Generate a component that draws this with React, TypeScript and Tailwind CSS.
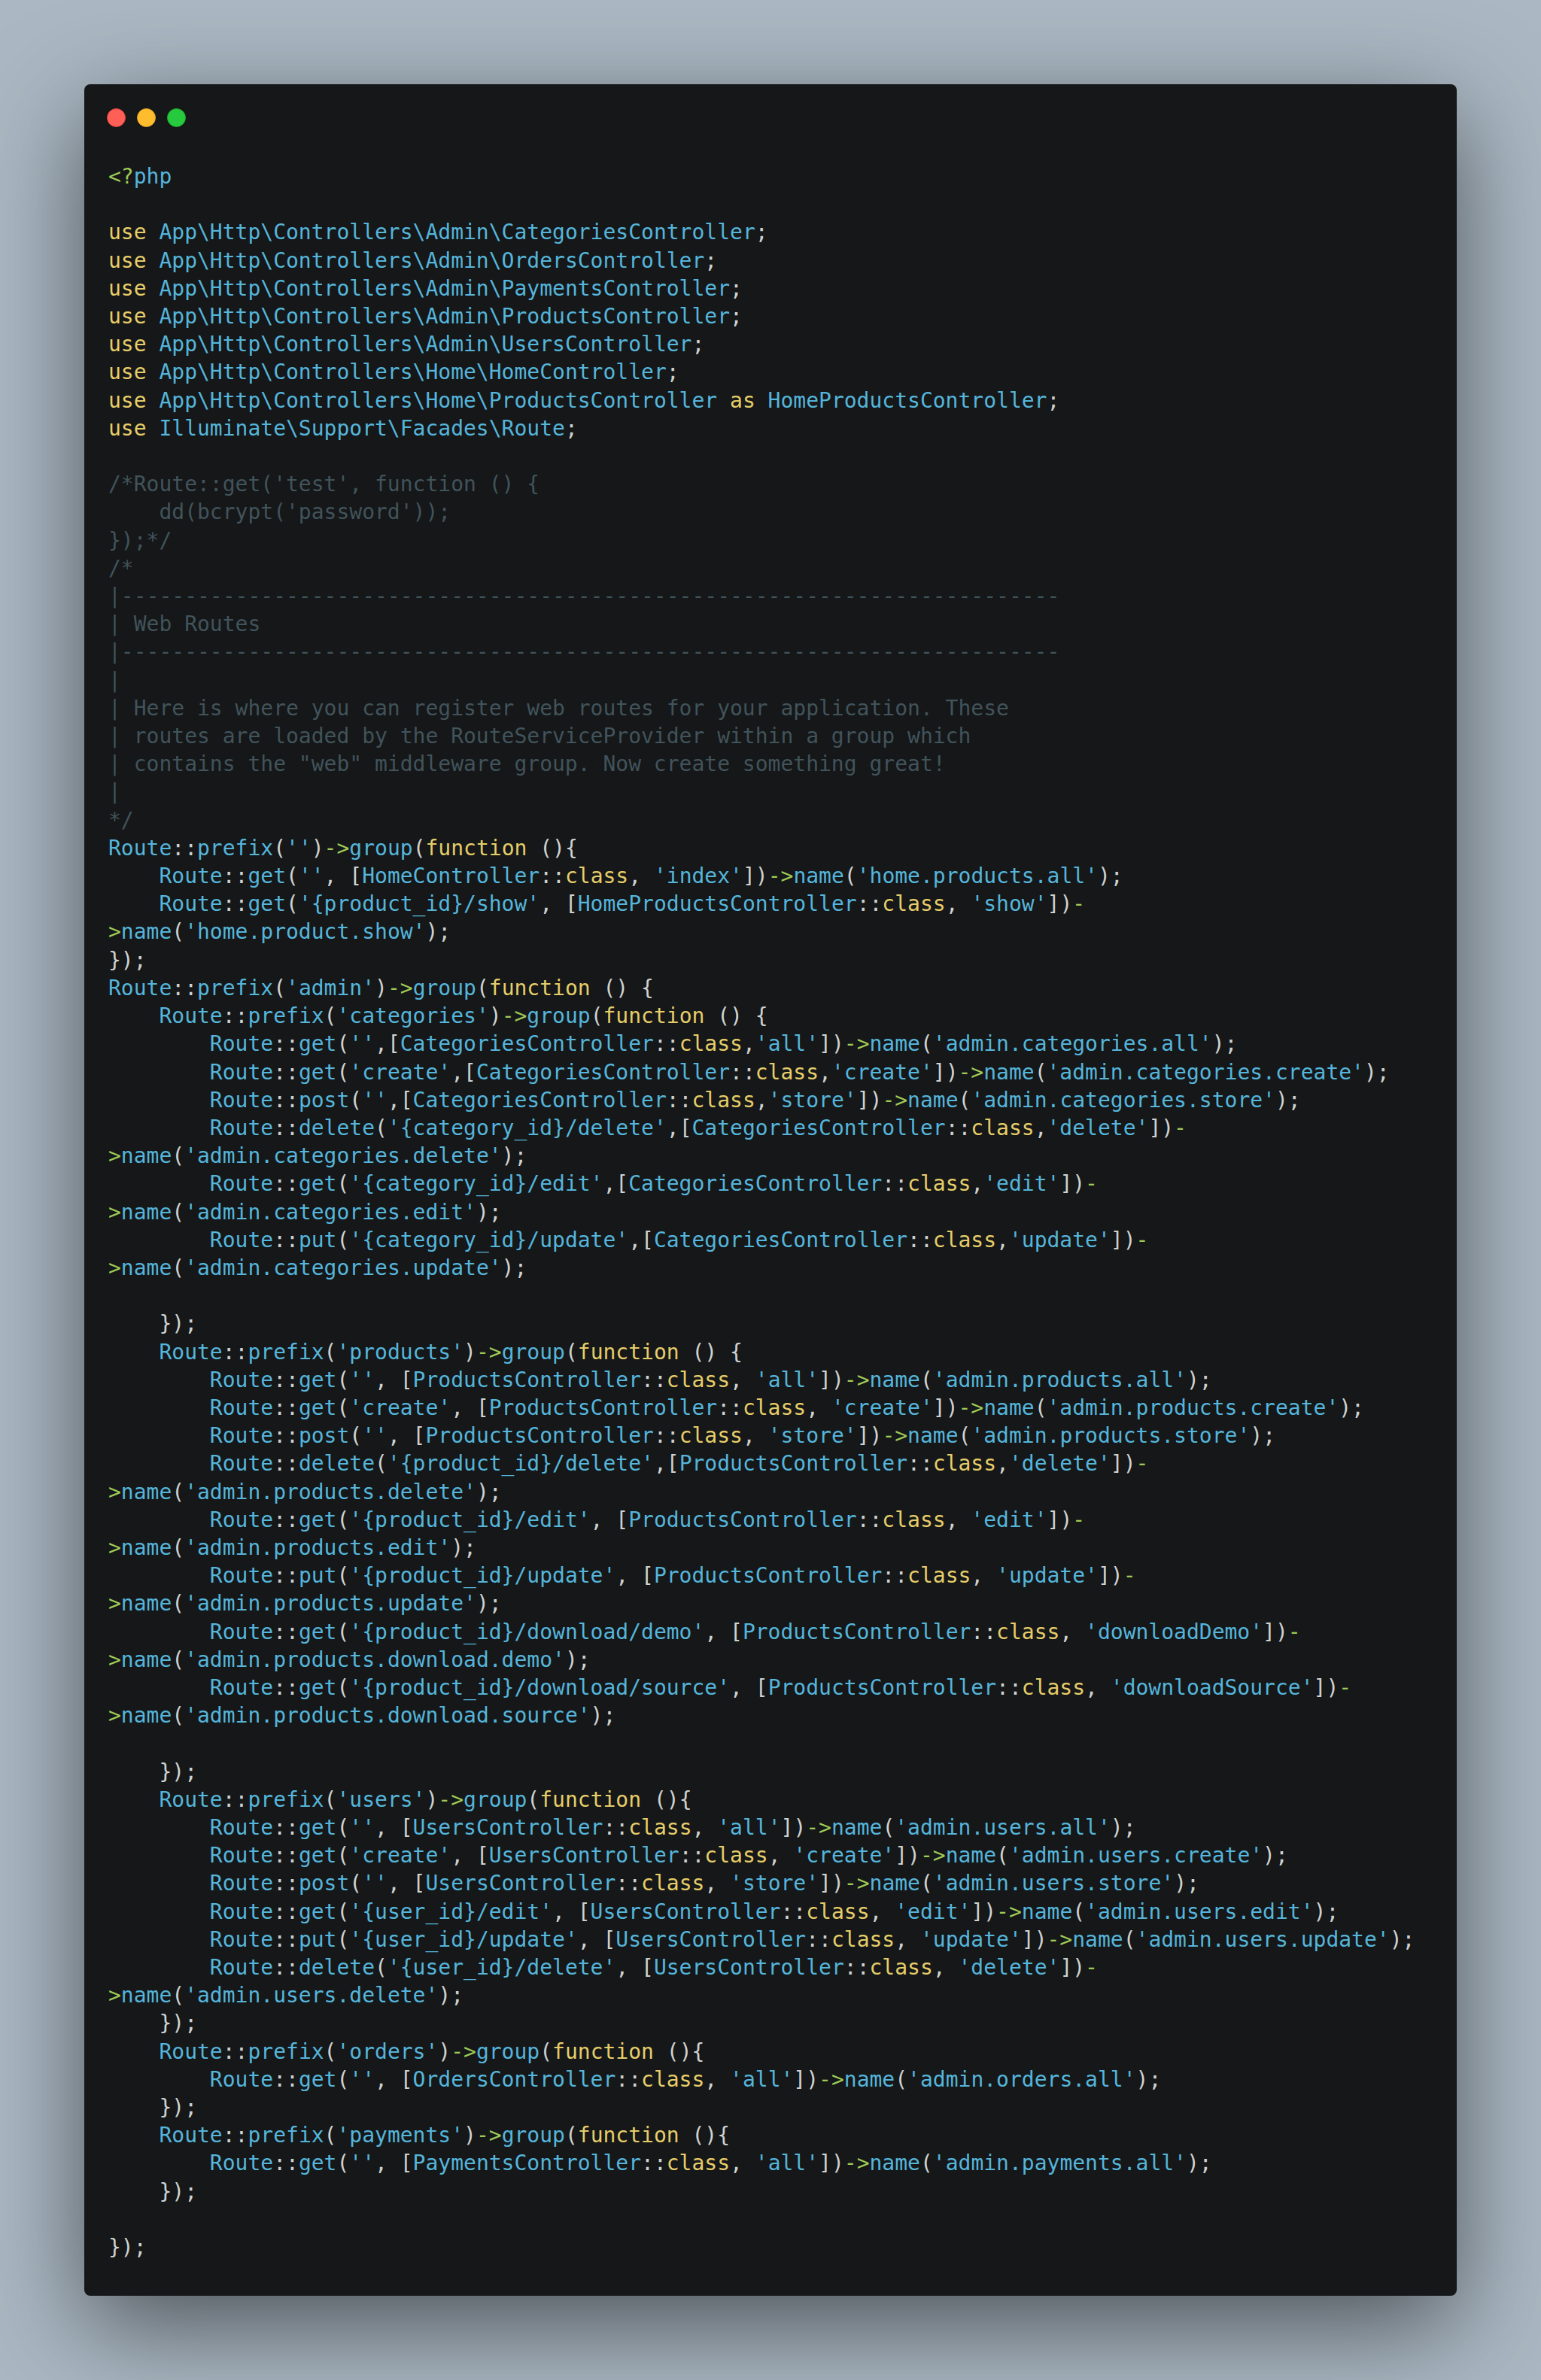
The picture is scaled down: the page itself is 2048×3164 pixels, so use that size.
const code = `<?php

use App\\Http\\Controllers\\Admin\\CategoriesController;
use App\\Http\\Controllers\\Admin\\OrdersController;
use App\\Http\\Controllers\\Admin\\PaymentsController;
use App\\Http\\Controllers\\Admin\\ProductsController;
use App\\Http\\Controllers\\Admin\\UsersController;
use App\\Http\\Controllers\\Home\\HomeController;
use App\\Http\\Controllers\\Home\\ProductsController as HomeProductsController;
use Illuminate\\Support\\Facades\\Route;

/*Route::get('test', function () {
    dd(bcrypt('password'));
});*/
/*
|--------------------------------------------------------------------------
| Web Routes
|--------------------------------------------------------------------------
|
| Here is where you can register web routes for your application. These
| routes are loaded by the RouteServiceProvider within a group which
| contains the "web" middleware group. Now create something great!
|
*/
Route::prefix('')->group(function (){
    Route::get('', [HomeController::class, 'index'])->name('home.products.all');
    Route::get('{product_id}/show', [HomeProductsController::class, 'show'])->name('home.product.show');
});
Route::prefix('admin')->group(function () {
    Route::prefix('categories')->group(function () {
        Route::get('',[CategoriesController::class,'all'])->name('admin.categories.all');
        Route::get('create',[CategoriesController::class,'create'])->name('admin.categories.create');
        Route::post('',[CategoriesController::class,'store'])->name('admin.categories.store');
        Route::delete('{category_id}/delete',[CategoriesController::class,'delete'])->name('admin.categories.delete');
        Route::get('{category_id}/edit',[CategoriesController::class,'edit'])->name('admin.categories.edit');
        Route::put('{category_id}/update',[CategoriesController::class,'update'])->name('admin.categories.update');

    });
    Route::prefix('products')->group(function () {
        Route::get('', [ProductsController::class, 'all'])->name('admin.products.all');
        Route::get('create', [ProductsController::class, 'create'])->name('admin.products.create');
        Route::post('', [ProductsController::class, 'store'])->name('admin.products.store');
        Route::delete('{product_id}/delete',[ProductsController::class,'delete'])->name('admin.products.delete');
        Route::get('{product_id}/edit', [ProductsController::class, 'edit'])->name('admin.products.edit');
        Route::put('{product_id}/update', [ProductsController::class, 'update'])->name('admin.products.update');
        Route::get('{product_id}/download/demo', [ProductsController::class, 'downloadDemo'])->name('admin.products.download.demo');
        Route::get('{product_id}/download/source', [ProductsController::class, 'downloadSource'])->name('admin.products.download.source');

    });
    Route::prefix('users')->group(function (){
        Route::get('', [UsersController::class, 'all'])->name('admin.users.all');
        Route::get('create', [UsersController::class, 'create'])->name('admin.users.create');
        Route::post('', [UsersController::class, 'store'])->name('admin.users.store');
        Route::get('{user_id}/edit', [UsersController::class, 'edit'])->name('admin.users.edit');
        Route::put('{user_id}/update', [UsersController::class, 'update'])->name('admin.users.update');
        Route::delete('{user_id}/delete', [UsersController::class, 'delete'])->name('admin.users.delete');
    });
    Route::prefix('orders')->group(function (){
        Route::get('', [OrdersController::class, 'all'])->name('admin.orders.all');
    });
    Route::prefix('payments')->group(function (){
        Route::get('', [PaymentsController::class, 'all'])->name('admin.payments.all');
    });

});`;

const colors: Record<string, string> = {
  k: "text-[#e6cd69]",
  b: "text-[#55b5db]",
  o: "text-[#9fca56]",
  t: "text-[#cfd2d1]",
  c: "text-[#41535b]",
};

function tokenize(line: string): [string, string][] {
  const re = /(<\?|->|::)|('[^']*')|\b(use|as|function|class)\b|([A-Za-z_\\][A-Za-z0-9_\\]*)|(\s+|.)/g;
  const out: [string, string][] = [];
  let m: RegExpExecArray | null;
  while ((m = re.exec(line))) {
    if (m[1]) out.push([m[1], m[1] === "::" ? "t" : "o"]);
    else if (m[2]) out.push([m[2], "b"]);
    else if (m[3]) out.push([m[3], "k"]);
    else if (m[4]) out.push([m[4], "b"]);
    else out.push([m[5], "t"]);
  }
  return out;
}

function Line({ text, comment }: { text: string; comment: boolean }) {
  if (text === "") return <div className="min-h-[37.21px]" />;
  if (comment) return <div className={colors.c}>{text}</div>;
  return (
    <div>
      {tokenize(text).map(([s, c], i) => (
        <span key={i} className={colors[c]}>
          {s}
        </span>
      ))}
    </div>
  );
}

export default function App() {
  let inComment = false;
  const lines = code.split("\n").map((text, i) => {
    const starts = text.startsWith("/*");
    if (starts) inComment = true;
    const comment = inComment;
    if (text.includes("*/")) inComment = false;
    return <Line key={i} text={text} comment={comment} />;
  });
  return (
    <div className="min-h-[3164px] bg-[#abb8c3] p-[112px]">
      <div className="h-[2940px] rounded-[8px] bg-[#151718] shadow-[0_40px_136px_rgba(0,0,0,0.55)] pl-[29.5px] pt-[31.5px]">
        <div className="flex gap-[15px]">
          <span className="h-[25px] w-[25px] rounded-full border border-[#e0443e] bg-[#ff5f56]" />
          <span className="h-[25px] w-[25px] rounded-full border border-[#dea123] bg-[#ffbd2e]" />
          <span className="h-[25px] w-[25px] rounded-full border border-[#1aab29] bg-[#27c93f]" />
        </div>
        <div className="ml-[2.5px] mt-[47.5px] w-[1745px] whitespace-pre-wrap font-['DejaVu_Sans_Mono',monospace] text-[28px] leading-[37.21px]">
          {lines}
        </div>
      </div>
    </div>
  );
}
